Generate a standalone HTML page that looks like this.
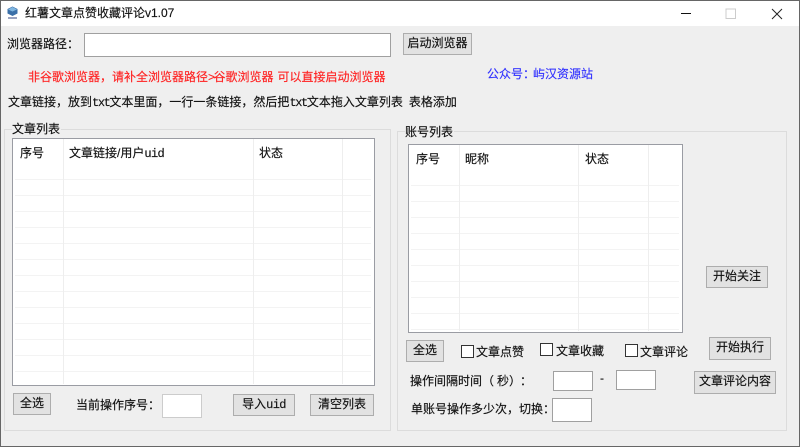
<!DOCTYPE html>
<html lang="zh"><head><meta charset="utf-8"><style>
html{background:#efefef}
html,body{margin:0;padding:0;width:800px;height:447px;overflow:hidden}
body{position:relative;background:#efefef;font:12px/14px "Liberation Sans","WenQuanYi Zen Hei","Noto Sans CJK SC",sans-serif;color:#111;filter:blur(.3px);-webkit-text-stroke:.15px currentColor}
.t,.b,.i,.g,.f,.c,.l{position:absolute;box-sizing:border-box}
.t{white-space:nowrap}
.m{font-family:"Liberation Mono","WenQuanYi Zen Hei",monospace;font-size:12px;letter-spacing:-1.4px}
.u{font-family:"Liberation Mono",monospace;font-size:12px;letter-spacing:-.6px}
.b{background:#e2e2e2;border:1.5px solid #adadad;text-align:center;line-height:19px;white-space:nowrap}
.i{background:#fff;border:1px solid #a0a0a0}
.g{border:1px solid #dcdcdc}
.f{background:#fff;border:1.5px solid #9a9ca3;overflow:hidden}
.c{width:13px;height:13px;background:#fff;border:1px solid #333}
.l{background:#f3f3f3}
</style></head><body>
<div style="position:absolute;left:0;top:0;width:800px;height:26px;background:#fff"></div>
<div style="position:absolute;left:0;top:0;width:800px;height:1px;background:#666"></div>
<div style="position:absolute;left:0;top:0;width:1px;height:447px;background:#666"></div>
<div style="position:absolute;right:0;top:0;width:1px;height:447px;background:#666"></div>
<div style="position:absolute;left:0;bottom:0;width:800px;height:1px;background:#666"></div>
<svg style="position:absolute;left:7px;top:6px" width="11" height="14" viewBox="0 0 11 14"><path d="M5.500 0.500L10.500 3V7.500L5.500 10L0.500 7.500V3Z" fill="#3a6fa8"/><path d="M1 3.500L5.500 1L10 3.500L5.500 5.500Z" fill="#7fb6e0"/><rect x="1" y="11" width="9" height="2" fill="#9aa3c0"/></svg>
<div class="t" style="left:25px;top:6px">红薯文章点赞收藏评论v1.07</div>
<svg style="position:absolute;left:680px;top:6px" width="110" height="16" viewBox="0 0 110 16"><path d="M1 7.500H11" stroke="#111" fill="none"/><rect x="46" y="3" width="9.500" height="9.500" fill="none" stroke="#ccc"/><path d="M92 3L102 13M102 3L92 13" stroke="#222" fill="none"/></svg>

<div class="t" style="left:7px;top:37px">浏览器路径：</div>
<div class="i" style="left:84px;top:33px;width:307px;height:24px"></div>
<div class="b" style="left:403px;top:33px;width:69px;height:22px">启动浏览器</div>
<div class="t" style="left:28px;top:70px;color:#f22">非谷歌浏览器，请补全浏览器路径<span style="letter-spacing:-1.5px">&gt;</span>谷歌浏览器<span style="display:inline-block;width:4px"></span>可以直接启动浏览器</div>
<div class="t" style="left:487px;top:67px;color:#3030ff">公众号<span style="letter-spacing:-2px">：</span>屿汉资源站</div>
<div class="t" style="left:8px;top:95px">文章链接，放到<span class="m">txt</span>文本里面，一行一条链接，然后把<span class="m">txt</span>文本拖入文章列表<span style="display:inline-block;width:6px"></span>表格添加</div>

<div class="g" style="left:4px;top:129px;width:387px;height:302px"></div>
<div class="t" style="left:12px;top:122px;background:#efefef;padding-right:1px">文章列表</div>
<div class="f" style="left:12px;top:138px;width:363px;height:248px">
<div id="a"></div>
</div>
<div class="t" style="left:20px;top:146px">序号</div>
<div class="t" style="left:69px;top:146px">文章链接/用户<span class="u">uid</span></div>
<div class="t" style="left:259px;top:146px">状态</div>
<div class="b" style="left:13px;top:393px;width:38px;height:22px">全选</div>
<div class="t" style="left:76px;top:398px">当前操作序号：</div>
<div class="i" style="left:162px;top:394px;width:40px;height:24px;border-color:#ccc"></div>
<div class="b" style="left:233px;top:394px;width:62px;height:22px">导入<span class="u">uid</span></div>
<div class="b" style="left:310px;top:394px;width:64px;height:22px">清空列表</div>

<div class="g" style="left:397px;top:131px;width:390px;height:300px"></div>
<div class="t" style="left:405px;top:125px;background:#efefef;padding-right:1px">账号列表</div>
<div class="f" style="left:408px;top:144px;width:275px;height:189px">
<div id="b"></div>
</div>
<div class="t" style="left:416px;top:152px">序号</div>
<div class="t" style="left:465px;top:152px">昵称</div>
<div class="t" style="left:585px;top:152px">状态</div>
<div class="b" style="left:406px;top:340px;width:38px;height:22px">全选</div>
<div class="c" style="left:461px;top:345px"></div><div class="t" style="left:476px;top:345px">文章点赞</div>
<div class="c" style="left:540px;top:343px"></div><div class="t" style="left:556px;top:344px">文章收藏</div>
<div class="c" style="left:625px;top:344px"></div><div class="t" style="left:640px;top:345px">文章评论</div>
<div class="b" style="left:706px;top:266px;width:62px;height:22px">开始关注</div>
<div class="b" style="left:709px;top:337px;width:62px;height:23px">开始执行</div>
<div class="t" style="left:410px;top:374px">操作间隔时间<span style="display:inline-block;width:15px">（</span>秒<span style="display:inline-block;width:11px">）</span>：</div>
<div class="i" style="left:553px;top:371px;width:40px;height:20px"></div>
<div class="t" style="left:600px;top:371px">-</div>
<div class="i" style="left:616px;top:370px;width:40px;height:20px"></div>
<div class="b" style="left:694px;top:371px;width:82px;height:23px">文章评论内容</div>
<div class="t" style="left:411px;top:402px">单账号操作多少次，切换：</div>
<div class="i" style="left:552px;top:398px;width:40px;height:24px"></div>
<script>
function draw(id,w,h,first,step,cols){
 var e=document.getElementById(id),s='';
 for(var y=first;y<h;y+=step)s+='<div class="l" style="left:2px;top:'+y+'px;width:'+(w-4)+'px;height:1px"></div>';
 cols.forEach(function(x){s+='<div class="l" style="left:'+x+'px;top:0;width:1px;height:'+h+'px;background:#eee"></div>';});
 e.innerHTML=s;
}
draw('a',360,245,39.500,16,[50,240,329]);
draw('b',272,186,39.500,16,[50,169,239]);
</script>
</body></html>
